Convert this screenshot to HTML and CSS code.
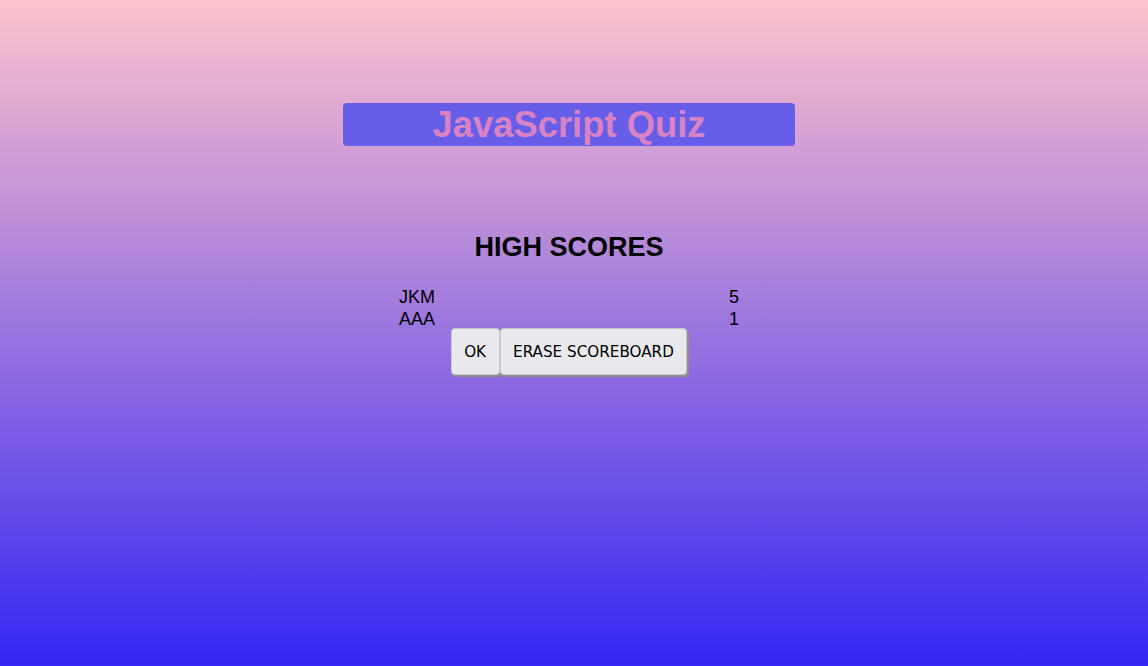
FILE: index.html
```html
<!DOCTYPE html>
<html>
<head>
<meta charset="utf-8">
<link rel="stylesheet" href="styles.css">
</head>
<body>
<div class="page">
  <header class="title-bar"><h1 class="title">JavaScript Quiz</h1></header>
  <section class="scores">
    <h2 class="scores-heading">HIGH SCORES</h2>
    <ul class="score-list">
      <li class="score-row"><span>JKM</span><span>5</span></li>
      <li class="score-row"><span>AAA</span><span>1</span></li>
    </ul>
    <div class="actions">
      <button class="btn">OK</button><button class="btn">ERASE SCOREBOARD</button>
    </div>
  </section>
</div>
</body>
</html>
```
FILE: styles.css
```css
html, body {
  margin: 0;
  height: 100%;
}
body {
  background: linear-gradient(to bottom, #ffc2cc 0%, #3426f3 100%);
  font-family: "Liberation Sans", Arial, sans-serif;
  color: #000;
}
.page {
  display: flex;
  flex-direction: column;
  align-items: center;
  padding: 103px 10px 0 0;
}
.title-bar {
  width: 452px;
  height: 43px;
  background: #665ee8;
  border-radius: 4px;
  display: flex;
  align-items: center;
  justify-content: center;
}
.title {
  margin: 0;
  font-size: 36.4px;
  font-weight: bold;
  color: #d982c6;
  line-height: 43px;
}
.scores {
  margin-top: 83px;
  display: flex;
  flex-direction: column;
  align-items: center;
}
.scores-heading {
  margin: 0;
  font-size: 27px;
  font-weight: bold;
  line-height: 36px;
}
.score-list {
  list-style: none;
  margin: 21px 0 0;
  padding: 0;
  width: 340px;
}
.score-row {
  display: flex;
  justify-content: space-between;
  font-size: 18px;
  line-height: 22px;
}
.actions {
  display: flex;
  margin-top: -2px;
}
.btn {
  font-family: "DejaVu Sans", Tahoma, sans-serif;
  font-size: 15.2px;
  height: 47px;
  padding: 0 12.5px;
  background: #e9e9ed;
  border: 1px solid #c8c8cc;
  border-radius: 4px;
  box-shadow: 2px 2px 0 #8f8f95;
  color: #000;
}
```
